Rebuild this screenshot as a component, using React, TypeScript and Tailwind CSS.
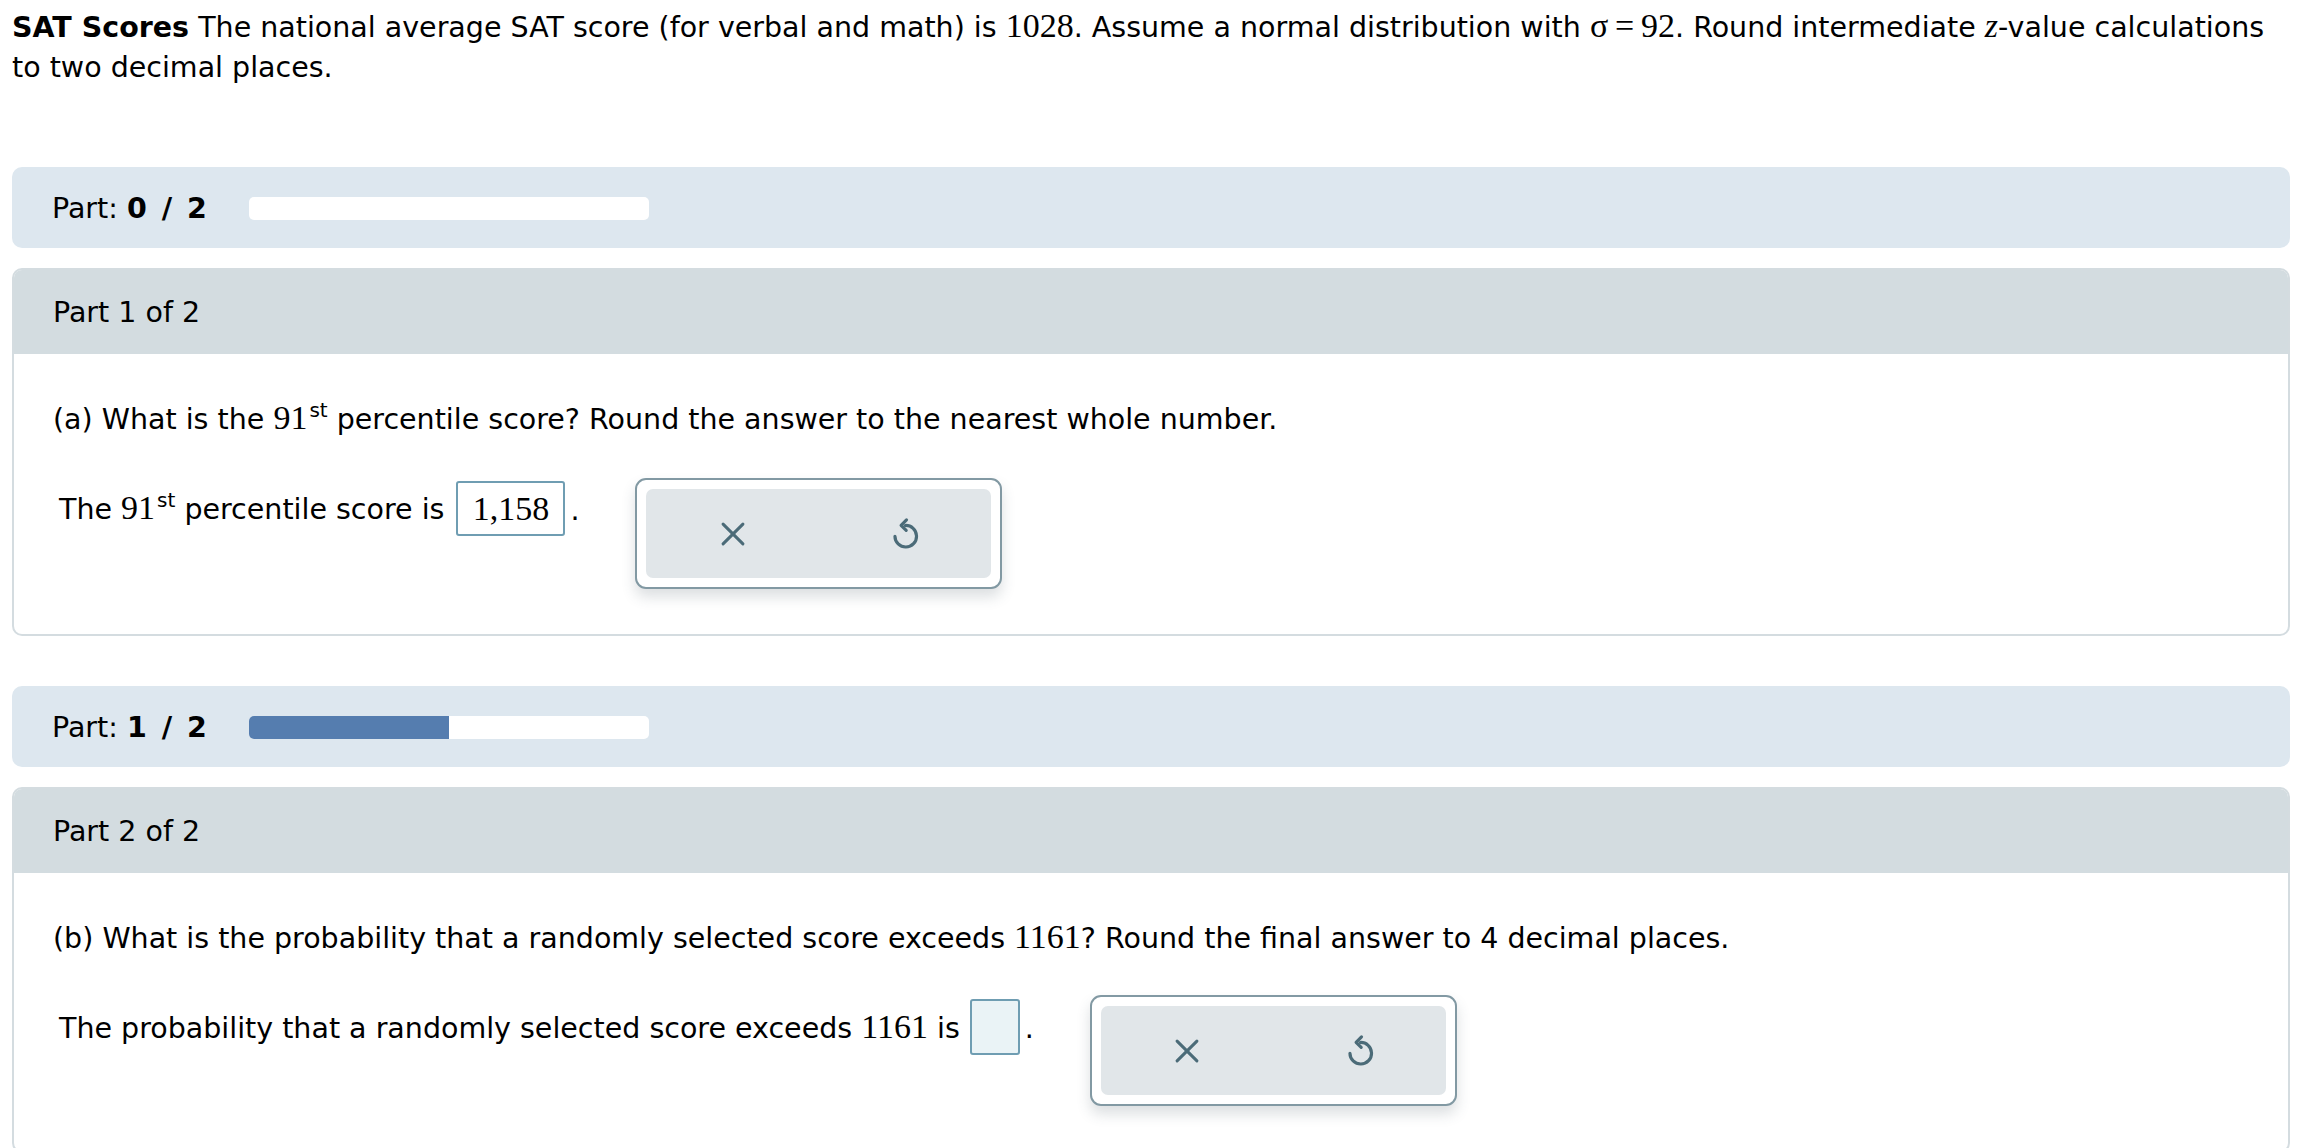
import React from 'react';

const serif = "font-['Liberation_Serif',serif] text-[34px] leading-none";

const CloseIcon: React.FC = () => (
  <svg width="28" height="28" viewBox="0 0 24 24" fill="none" stroke="#4b6b78" strokeWidth="2.6" strokeLinecap="round">
    <path d="M3.5 3.5L20.5 20.5" />
    <path d="M20.5 3.5L3.5 20.5" />
  </svg>
);

const UndoIcon: React.FC = () => (
  <svg width="36" height="36" viewBox="0 0 24 24" fill="none" stroke="#4b6b78" strokeWidth="2.1" strokeLinecap="round" strokeLinejoin="round">
    <path d="M12.2 6.3A7.2 7.2 0 1 1 5.3 13.5" />
    <path d="M13 2.6L9.4 6.2L12.8 9.6" />
  </svg>
);

const ActionGroup: React.FC = () => (
  <div className="ml-[56px] w-[367px] h-[111px] shrink-0 rounded-[11px] border-2 border-[#8299a3] bg-white p-[9px] shadow-[0_8px_14px_rgba(60,80,90,0.18)]">
    <div className="flex h-full rounded-[7px] bg-[#e1e6e9]">
      <button className="flex flex-1 items-center justify-center">
        <CloseIcon />
      </button>
      <button className="flex flex-1 items-center justify-center">
        <UndoIcon />
      </button>
    </div>
  </div>
);

const Progress: React.FC<{ done: number; total: number }> = ({ done, total }) => (
  <div className="mr-[23px] ml-[12px] flex h-[81px] items-center rounded-[10px] bg-[#dde7ef] pl-[40px] pt-[2px]">
    <span className="w-[197px] shrink-0">
      Part: <b className="[word-spacing:5px]">{done} / {total}</b>
    </span>
    <div className="h-[23px] w-[400px] overflow-hidden rounded-[5px] bg-white">
      <div className="h-full bg-[#557daf]" style={{ width: `${(done / total) * 100}%` }} />
    </div>
  </div>
);

const Card: React.FC<{ title: string; children: React.ReactNode }> = ({ title, children }) => (
  <div className="mr-[23px] ml-[12px] mt-[20px] overflow-hidden rounded-[10px] border-2 border-[#d4dce0] bg-white">
    <div className="flex h-[84px] items-center bg-[#d3dce0] pl-[39px] pt-[2px]">{title}</div>
    <div className="pl-[39px] pt-[46px] pb-[45px]">{children}</div>
  </div>
);

const Sup: React.FC<{ children: React.ReactNode }> = ({ children }) => (
  <span className="relative top-[-12px] ml-[2px] align-baseline text-[20px]">{children}</span>
);

export default function App() {
  return (
    <div className="min-h-screen bg-white font-['DejaVu_Sans',sans-serif] text-[28.5px] leading-[40px] text-black">
      <p className="pl-[12px] pr-[30px] pt-[8px]">
        <b>SAT Scores</b> The national average SAT score (for verbal and math) is{' '}
        <span className={serif}>1028</span>. Assume a normal distribution with{' '}
        <span className={serif}>σ&thinsp;=&thinsp;92</span>. Round intermediate{' '}
        <i className={serif}>z</i>-value calculations to two decimal places.
      </p>

      <div className="mt-[79px]">
        <Progress done={0} total={2} />
      </div>

      <Card title="Part 1 of 2">
        <p>
          (a) What is the <span className={serif}>91</span>
          <Sup>st</Sup> percentile score? Round the answer to the nearest whole number.
        </p>
        <div className="mt-[36px] flex items-start pl-[6px]">
          <div className="mt-[3px] flex h-[55px] items-center">
            <span className="pt-[4px]">
              The <span className={serif}>91</span>
              <Sup>st</Sup> percentile score is
            </span>
            <span className={`${serif} ml-[12px] flex h-[55px] w-[109px] items-center justify-center rounded-[3px] border-2 border-[#6f9db2]`}>
              1,158
            </span>
            <span className="ml-[5px] pt-[4px]">.</span>
          </div>
          <ActionGroup />
        </div>
      </Card>

      <div className="mt-[50px]">
        <Progress done={1} total={2} />
      </div>

      <Card title="Part 2 of 2">
        <p>
          (b) What is the probability that a randomly selected score exceeds{' '}
          <span className={serif}>1161</span>? Round the final answer to 4 decimal places.
        </p>
        <div className="mt-[36px] flex items-start pl-[6px]">
          <div className="mt-[4px] flex h-[56px] items-center">
            <span className="pt-[4px]">
              The probability that a randomly selected score exceeds{' '}
              <span className={serif}>1161</span> is
            </span>
            <span className="ml-[10px] h-[56px] w-[50px] rounded-[3px] border-2 border-[#6f9db2] bg-[#eaf3f6]" />
            <span className="ml-[5px] pt-[4px]">.</span>
          </div>
          <ActionGroup />
        </div>
      </Card>
    </div>
  );
}
